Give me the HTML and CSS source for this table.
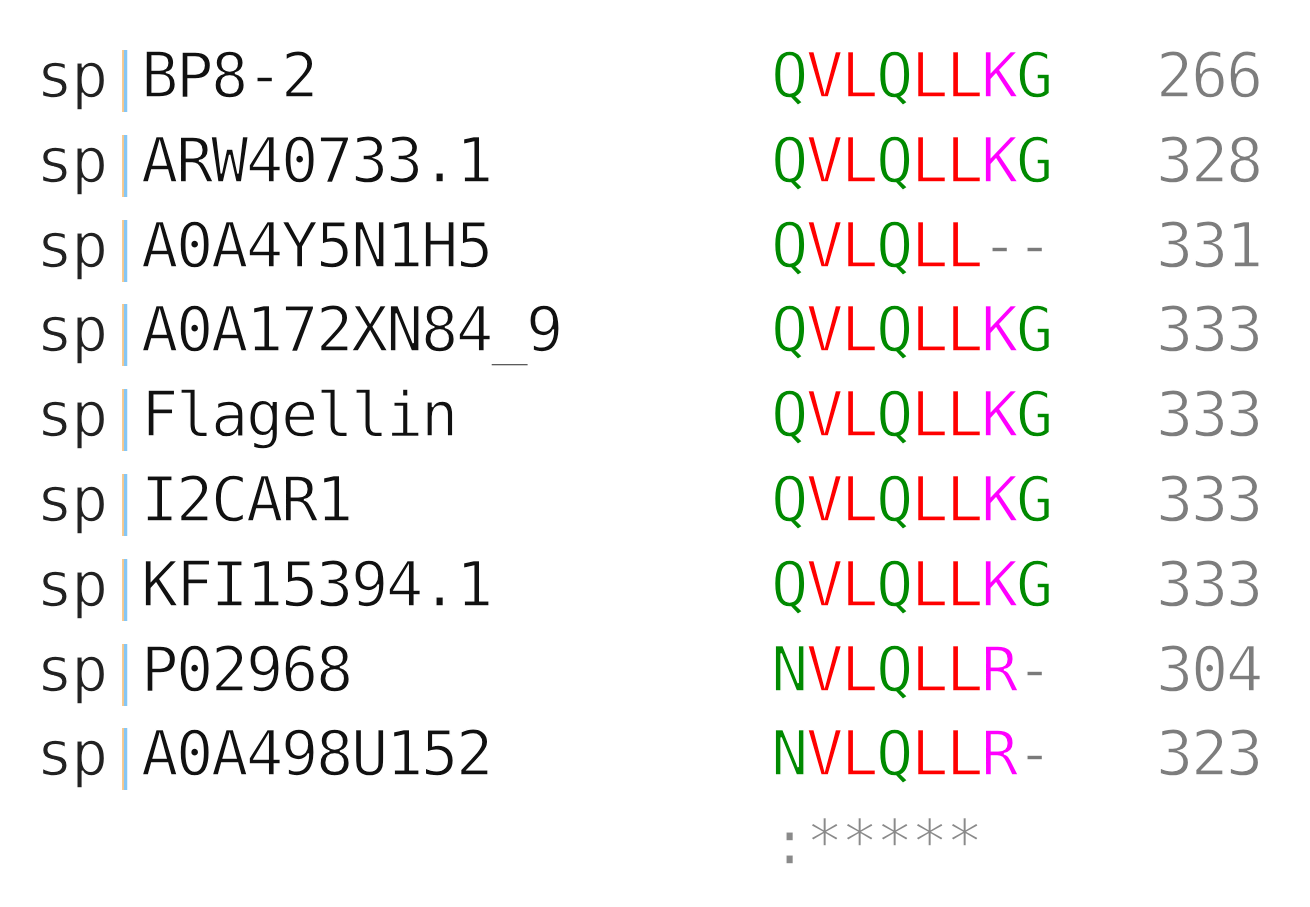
FILE: index.html
```html
<!doctype html>
<html lang="en">
<head>
    <meta charset="utf-8">
    <title>Alignment</title>
    <link rel="stylesheet" href="styles.css">
</head>
<body>
    <div class="aln">
        <div class="row">
            <div class="name"><span class="db">sp</span><span class="bar">|</span>BP8-2</div>
            <div class="seq"><span class="g">Q</span><span class="r">VL</span><span class="g">Q</span><span class="r">LL</span><span class="m">K</span><span class="g">G</span></div>
            <div class="num">266</div>
        </div>
        <div class="row">
            <div class="name"><span class="db">sp</span><span class="bar">|</span>ARW40733.1</div>
            <div class="seq"><span class="g">Q</span><span class="r">VL</span><span class="g">Q</span><span class="r">LL</span><span class="m">K</span><span class="g">G</span></div>
            <div class="num">328</div>
        </div>
        <div class="row">
            <div class="name"><span class="db">sp</span><span class="bar">|</span>A0A4Y5N1H5</div>
            <div class="seq"><span class="g">Q</span><span class="r">VL</span><span class="g">Q</span><span class="r">LL</span><span class="gap">--</span></div>
            <div class="num">331</div>
        </div>
        <div class="row">
            <div class="name"><span class="db">sp</span><span class="bar">|</span>A0A172XN84_9</div>
            <div class="seq"><span class="g">Q</span><span class="r">VL</span><span class="g">Q</span><span class="r">LL</span><span class="m">K</span><span class="g">G</span></div>
            <div class="num">333</div>
        </div>
        <div class="row">
            <div class="name"><span class="db">sp</span><span class="bar">|</span>Flagellin</div>
            <div class="seq"><span class="g">Q</span><span class="r">VL</span><span class="g">Q</span><span class="r">LL</span><span class="m">K</span><span class="g">G</span></div>
            <div class="num">333</div>
        </div>
        <div class="row">
            <div class="name"><span class="db">sp</span><span class="bar">|</span>I2CAR1</div>
            <div class="seq"><span class="g">Q</span><span class="r">VL</span><span class="g">Q</span><span class="r">LL</span><span class="m">K</span><span class="g">G</span></div>
            <div class="num">333</div>
        </div>
        <div class="row">
            <div class="name"><span class="db">sp</span><span class="bar">|</span>KFI15394.1</div>
            <div class="seq"><span class="g">Q</span><span class="r">VL</span><span class="g">Q</span><span class="r">LL</span><span class="m">K</span><span class="g">G</span></div>
            <div class="num">333</div>
        </div>
        <div class="row">
            <div class="name"><span class="db">sp</span><span class="bar">|</span>P02968</div>
            <div class="seq"><span class="g">N</span><span class="r">VL</span><span class="g">Q</span><span class="r">LL</span><span class="m">R</span><span class="gap">-</span></div>
            <div class="num">304</div>
        </div>
        <div class="row">
            <div class="name"><span class="db">sp</span><span class="bar">|</span>A0A498U152</div>
            <div class="seq"><span class="g">N</span><span class="r">VL</span><span class="g">Q</span><span class="r">LL</span><span class="m">R</span><span class="gap">-</span></div>
            <div class="num">323</div>
        </div>
        <div class="row">
            <div class="name"></div>
            <div class="seq cons">:*****</div>
            <div class="num"></div>
        </div>
    </div>
</body>
</html>
```

FILE: styles.css
```css
* {
    box-sizing: border-box;
}
body {
    margin: 0;
    padding: 34px 0 0 36px;
    background-color: #fff;
}
.aln {
    font-family: "DejaVu Sans Mono", "Liberation Mono", monospace;
    font-size: 62px;
    letter-spacing: -2.327px;
    line-height: 84.8px;
    color: #111;
    -webkit-text-stroke: 1.4px #fff;
}
.row {
    display: grid;
    grid-template-columns: 735px 385px auto;
    height: 84.8px;
    white-space: nowrap;
}
.db {
    color: #222;
}
.bar {
    background: linear-gradient(90deg, #f6c88c 18.5px, #86c6f4 18.5px);
    -webkit-background-clip: text;
    background-clip: text;
    color: transparent;
    -webkit-text-stroke: 0;
}
.g {
    color: #008a00;
}
.r {
    color: #ff0000;
}
.m {
    color: #ff00ff;
}
.gap {
    color: #7a7a7a;
}
.num {
    color: #7d7d7d;
}
.cons {
    color: #8a8a8a;
    padding-top: 4px;
}
```
